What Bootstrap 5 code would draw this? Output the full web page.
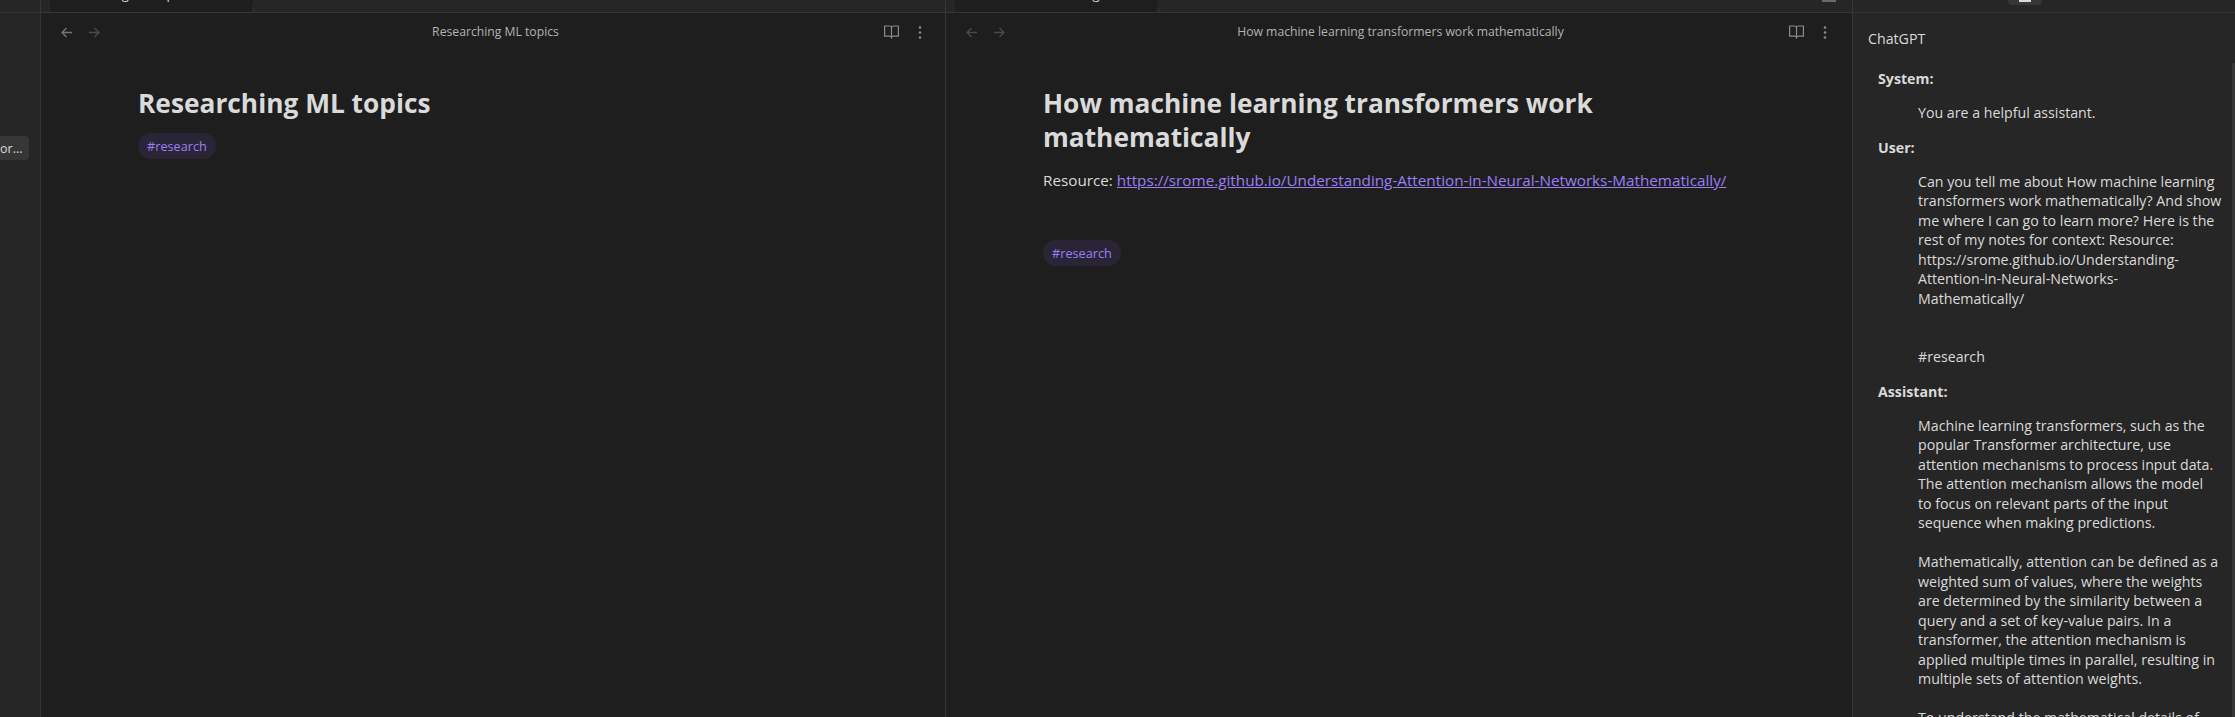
<!DOCTYPE html>
<html lang="en">
<head>
<meta charset="utf-8">
<title>Obsidian</title>
<link href="https://cdn.jsdelivr.net/npm/bootstrap@5.3.0/dist/css/bootstrap.min.css" rel="stylesheet">
<style>
html,body{height:717px;overflow:hidden;background:#1e1e1e}
body{font-family:"Open Sans","Noto Sans",sans-serif;color:#dadada;font-size:15.25px}
.app{height:717px}
.ribbon{width:41px;background:#262626;border-right:1px solid #363636;flex:none}
.ribbon-top{height:13px;border-bottom:1px solid #363636}
.pill-btn{margin-top:123px;width:29px;height:24px;background:#363636;border-radius:0 4px 4px 0;color:#dadada;font-size:12.5px;line-height:26px;text-align:right;padding-right:8px;overflow:hidden}
.pane{width:905px;border-right:1px solid #363636;flex:none;min-width:0}
.pane-wide{width:907px}
.tabbar{height:13px;background:#262626;flex:none;overflow:hidden;border-bottom:1px solid #363636;position:relative}
.tabhead{width:201px;height:13px;background:#1e1e1e;margin-left:10px;font-size:13px;color:#dadada;line-height:14px;overflow:hidden;white-space:nowrap;margin-bottom:-1px;position:relative;box-shadow:0 0 0 1px #1e1e1e}
.tabhead span{display:block;margin-top:-13px}
.tab-one span{padding-left:4px}
.tab-two span{padding-left:8px}
.tabbar::before,.tabbar::after{content:"";position:absolute;bottom:-1px;width:9px;height:6px;border-bottom:1px solid #363636}
.pane .tabbar::before{left:2px;border-right:1px solid #363636;border-bottom-right-radius:5px}
.pane .tabbar::after{left:211px;border-left:1px solid #363636;border-bottom-left-radius:5px}
.side .tabbar::before,.side .tabbar::after{display:none}
.viewhead{height:37px;padding:1px 23px 0 20px}
.pane-wide .viewhead{padding-right:25px}
.navs{gap:17px;width:60px}
.vtitle{font-size:12.2px;color:#b3b3b3;text-align:center}
.acts{gap:19px;width:52px;justify-content:flex-end}
.note{padding:36px 0 0 97px;width:797px}
.note h1{font-size:26.3px;line-height:34px;font-weight:700;color:#dadada;margin:0}
.tagpill{display:inline-block;background:#2a2536;color:#9a7ff5;border-radius:13px;font-size:12.7px;line-height:18px;padding:4px 9px}
.tag-row{margin-top:13px}
.resource{margin:14px 0 0;line-height:24px}
.tag-row-far{margin-top:48px}
.rlink{color:#9a7ff5}
.side{flex:1 1 0;background:#262626;min-width:0;position:relative;font-size:14.2px}
.mini-tab{position:absolute;left:155px;top:0;width:34px;height:5px;background:#363636;border-radius:0 0 4px 4px}
.mini-tab i{display:block;width:12px;height:2px;background:#dadada;margin:0 auto}
.mini-mark{position:absolute;left:876px;top:0;width:14px;height:2px;background:#6a6a6a}
.sidetitle{padding:16px 0 0 15px;line-height:20px}
.chat{padding:20px 0 0 25px}
.who{font-weight:700;line-height:20px}
.msg{margin:14px 0 15px 40px;line-height:19.5px;white-space:pre-wrap;width:308px}
.thumb{position:absolute;right:0;top:63px;width:3px;bottom:0;background:#363636}
svg{display:block}
</style>
</head>
<body>
<div class="app d-flex">
  <div class="ribbon"><div class="ribbon-top"></div><div class="pill-btn">or...</div></div>
  <div class="pane d-flex flex-column">
    <div class="tabbar"><div class="tabhead tab-one"><span>Researching ML topics</span></div></div>
    <div class="viewhead d-flex align-items-center justify-content-between">
      <div class="navs d-flex">
        <svg width="11" height="11" viewBox="0 0 11 11" fill="none" stroke="#757575" stroke-width="1.3"><path d="M11 5.5H1M5.5 1 1 5.5 5.500 10"/></svg>
        <svg width="11" height="11" viewBox="0 0 11 11" fill="none" stroke="#4a4a4a" stroke-width="1.3"><path d="M0 5.5h10M5.5 1 10 5.500 5.500 10"/></svg>
      </div>
      <div class="vtitle">Researching ML topics</div>
      <div class="acts d-flex align-items-center">
        <svg width="15" height="14" viewBox="0 0 15 14" fill="none" stroke="#8a8a8a" stroke-width="1.2"><path d="M.6 1h5c1 0 1.9.5 1.9 1.5C7.500 1.500 8.400 1 9.400 1h5v10.200h-5c-1 0-1.900.4-1.900 1.400 0-1-.9-1.400-1.900-1.400h-5zM7.500 2.500V13.800"/></svg>
        <svg width="4" height="13" viewBox="0 0 4 13" fill="#8a8a8a"><circle cx="2" cy="1.500" r="1.300"/><circle cx="2" cy="6.500" r="1.300"/><circle cx="2" cy="11.500" r="1.300"/></svg>
      </div>
    </div>
    <div class="note">
      <h1>Researching ML topics</h1>
      <div class="tag-row d-flex"><span class="tagpill">#research</span></div>
    </div>
  </div>
  <div class="pane pane-wide d-flex flex-column">
    <div class="tabbar"><div class="tabhead tab-two"><span>How machine learning</span></div><div class="mini-mark"></div></div>
    <div class="viewhead d-flex align-items-center justify-content-between">
      <div class="navs d-flex">
        <svg width="11" height="11" viewBox="0 0 11 11" fill="none" stroke="#4a4a4a" stroke-width="1.3"><path d="M11 5.5H1M5.5 1 1 5.5 5.500 10"/></svg>
        <svg width="11" height="11" viewBox="0 0 11 11" fill="none" stroke="#4a4a4a" stroke-width="1.3"><path d="M0 5.5h10M5.5 1 10 5.500 5.500 10"/></svg>
      </div>
      <div class="vtitle">How machine learning transformers work mathematically</div>
      <div class="acts d-flex align-items-center">
        <svg width="15" height="14" viewBox="0 0 15 14" fill="none" stroke="#8a8a8a" stroke-width="1.2"><path d="M.6 1h5c1 0 1.9.5 1.9 1.5C7.500 1.500 8.400 1 9.400 1h5v10.200h-5c-1 0-1.900.4-1.900 1.400 0-1-.9-1.400-1.900-1.400h-5zM7.500 2.500V13.800"/></svg>
        <svg width="4" height="13" viewBox="0 0 4 13" fill="#8a8a8a"><circle cx="2" cy="1.500" r="1.300"/><circle cx="2" cy="6.500" r="1.300"/><circle cx="2" cy="11.500" r="1.300"/></svg>
      </div>
    </div>
    <div class="note">
      <h1>How machine learning transformers work mathematically</h1>
      <p class="resource">Resource: <a class="rlink" href="#">https://srome.github.io/Understanding-Attention-in-Neural-Networks-Mathematically/</a></p>
      <div class="tag-row-far d-flex"><span class="tagpill">#research</span></div>
    </div>
  </div>
  <div class="side d-flex flex-column">
    <div class="tabbar"><div class="mini-tab"><i></i></div></div>
    <div class="sidetitle">ChatGPT</div>
    <div class="chat">
      <div class="who">System:</div>
      <div class="msg">You are a helpful assistant.</div>
      <div class="who">User:</div>
      <div class="msg">Can you tell me about How machine learning transformers work mathematically? And show me where I can go to learn more? Here is the rest of my notes for context: Resource: https://srome.github.io/Understanding-Attention-in-Neural-Networks-
Mathematically/


#research</div>
      <div class="who">Assistant:</div>
      <div class="msg">Machine learning transformers, such as the popular Transformer architecture, use attention mechanisms to process input data. The attention mechanism allows the model
to focus on relevant parts of the input sequence when making predictions.

Mathematically, attention can be defined as a weighted sum of values, where the weights are determined by the similarity between a query and a set of key-value pairs. In a transformer, the attention mechanism is applied multiple times in parallel, resulting in multiple sets of attention weights.

To understand the mathematical details of</div>
    </div>
    <div class="thumb"></div>
  </div>
</div>
<script src="https://cdn.jsdelivr.net/npm/bootstrap@5.3.0/dist/js/bootstrap.bundle.min.js"></script>
</body>
</html>
